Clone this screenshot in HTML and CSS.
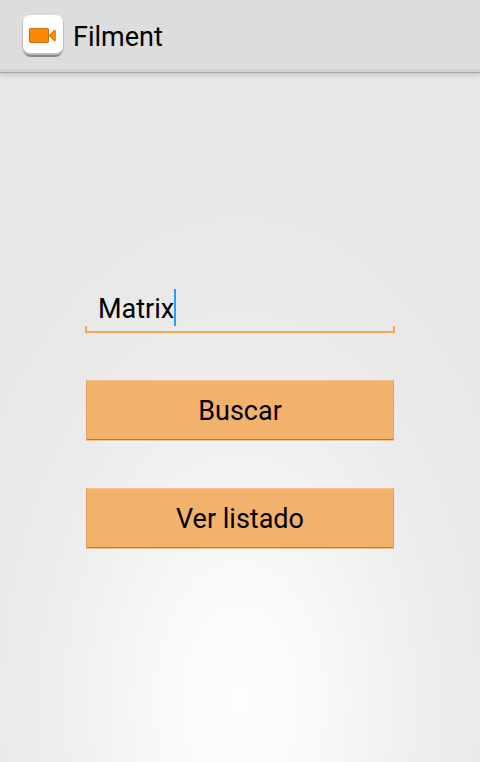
FILE: index.html
```html
<!DOCTYPE html>
<html lang="es">
<head>
    <meta charset="UTF-8">
    <meta name="viewport" content="width=device-width, initial-scale=1.0">
    <title>Filment</title>
    <link rel="stylesheet" href="styles.css">
</head>
<body>
    <header class="action-bar">
        <svg class="logo" viewBox="0 0 42 43" aria-hidden="true">
            <rect x="1" y="3" width="40" height="39" rx="8" fill="#858585"/>
            <rect x="0" y="1" width="42" height="39" rx="8" fill="#bdbdbd"/>
            <rect x="1" y="0" width="40" height="38" rx="7" fill="#ffffff"/>
            <path d="M9 13h16q2 0 2 2v11q0 2-2 2H9q-2 0-2-2V15q0-2 2-2z" fill="#ff8800"/>
            <path d="M27 20l5-5q2-1 2 1v9q0 2-2 1l-5-5z" fill="#ff8800"/>
            <path d="M7.500 26V15q0-1.500 1.500-1.500h16q1.500 0 1.500 1.500v11q0 1.500-1.500 1.500H9q-1.500 0-1.500-1.500zM27.500 20.500l5-5M27.500 20.500l5 5" fill="none" stroke="#a86a20" stroke-opacity="0.7"/>
        </svg>
        <h1>Filment</h1>
    </header>
    <main class="container">
        <form class="search-form">
            <label class="field">
                <input type="text" class="field-input" value="Matrix" aria-label="Título" autocomplete="off" spellcheck="false">
                <span class="caret"></span>
            </label>
            <button type="submit" class="btn">Buscar</button>
            <button type="button" class="btn">Ver listado</button>
        </form>
    </main>
</body>
</html>
```

FILE: styles.css
```css
* {
    box-sizing: border-box;
}

body {
    display: flex;
    flex-direction: column;
    min-height: 100vh;
    margin: 0;
    font-family: Roboto, sans-serif;
    color: #000000;
    background: radial-gradient(ellipse 70% 72% at 50% 92%, #fdfdfd 0%, #fafafa 20%, #f6f6f6 32%, #f1f1f1 46%, #ededed 59%, #eaeaea 74%, #e7e7e7 100%);
}

.action-bar {
    display: flex;
    align-items: center;
    gap: 9px;
    height: 73px;
    padding: 0 22px;
    background-color: #dddddd;
    border-bottom: 1px solid #a8a8a8;
    box-shadow: inset 0 -3px 0 #d2d2d2, 0 1px 6px rgba(0, 0, 0, 0.2);
}

.logo {
    width: 42px;
    height: 43px;
}

h1 {
    margin: 0;
    padding-top: 2px;
    font-size: 27px;
    font-weight: 400;
    line-height: 36px;
}

.container {
    display: flex;
    flex: 1;
    flex-direction: column;
    justify-content: center;
    padding: 0 85px 2px;
}

.search-form {
    display: flex;
    flex-direction: column;
    gap: 47px;
}

/* underline with a short tick at each end */
.field {
    display: flex;
    align-items: center;
    height: 48px;
    padding: 0 13px 3px;
    background:
        linear-gradient(#f3a953, #f3a953) left bottom / 100% 2px no-repeat,
        linear-gradient(#f3a953, #f3a953) left bottom / 2px 7px no-repeat,
        linear-gradient(#f3a953, #f3a953) right bottom / 2px 7px no-repeat;
    cursor: text;
}

.field-input {
    field-sizing: content;
    max-width: 100%;
    padding: 4px 0 0;
    border: none;
    outline: none;
    background: none;
    color: inherit;
    font-family: inherit;
    font-size: 27px;
    line-height: 36px;
}

.caret {
    width: 2px;
    height: 37px;
    background-color: #2b9ff5;
}

.btn {
    height: 61px;
    margin: 0 1px;
    padding: 2px 0 0;
    border: 1px solid;
    border-color: #f6c48f #dca266 #f0c493;
    box-shadow: inset 0 -1px 0 #b17c40;
    background-color: #f2b26c;
    color: inherit;
    font-family: inherit;
    font-size: 27px;
    line-height: 36px;
    cursor: pointer;
}

.btn:active {
    background-color: #f3a953;
}
```
